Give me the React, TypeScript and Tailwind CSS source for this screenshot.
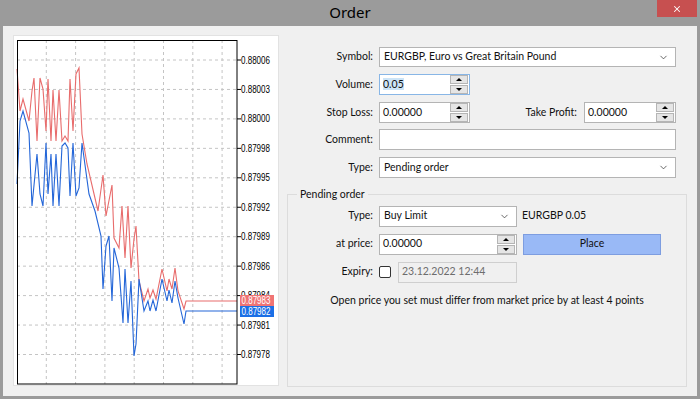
import { ChevronDown, X } from 'lucide-react';

const FONT = { fontFamily: 'Lato, "Liberation Sans", sans-serif' };
const CHART_FONT = { fontFamily: '"Liberation Sans", Arial, sans-serif' };

const ask: [number, number][] = [
  [16, 68], [19, 110], [22, 98], [28, 120], [31, 90], [33, 77], [36, 140], [39, 77], [42, 88],
  [45, 130], [47, 78], [50, 140], [52, 89], [55, 140], [58, 89], [61, 140], [64, 135], [67, 140],
  [69, 78], [72, 130], [75, 73], [78, 67], [81, 133], [86, 163], [97, 210], [102, 174], [105, 215],
  [111, 184], [113, 237], [118, 247], [121, 205], [124, 257], [127, 205], [130, 267], [133, 238],
  [135, 225], [138, 280], [143, 300], [147, 288], [149, 297], [152, 289], [155, 298], [161, 268],
  [166, 290], [168, 278], [171, 288], [174, 267], [177, 290], [183, 308], [185, 300], [236, 300],
];

const bid: [number, number][] = [
  [16, 183], [19, 120], [22, 110], [28, 132], [31, 205], [36, 153], [39, 193], [42, 205], [45, 142],
  [47, 193], [50, 153], [52, 205], [55, 153], [58, 205], [61, 145], [64, 142], [67, 147], [69, 195],
  [72, 142], [75, 195], [78, 187], [81, 142], [88, 193], [94, 210], [100, 235], [102, 288], [105, 245],
  [108, 235], [111, 300], [113, 247], [118, 267], [122, 322], [124, 268], [127, 322], [130, 280],
  [133, 355], [135, 343], [138, 278], [143, 310], [147, 300], [149, 310], [152, 299], [155, 310],
  [161, 278], [166, 300], [168, 289], [171, 302], [174, 280], [177, 297], [183, 323], [185, 310],
  [236, 310],
];

const levels = ['0.88006', '0.88003', '0.88000', '0.87998', '0.87995', '0.87992', '0.87989', '0.87986', '0.87984', '0.87981', '0.87978'];

function Chart() {
  const pts = (p: [number, number][]) => p.map(([x, y]) => `${x},${y}`).join(' ');
  return (
    <svg width="266" height="351" viewBox="13 35 266 351" className="block">
      {[0, 1, 2, 3, 4, 5, 6].map((k) => {
        const x = 45.3 + k * 29.3;
        return <line key={k} x1={x} y1={39} x2={x} y2={383} stroke="#c4c4c4" strokeDasharray="3 3" />;
      })}
      {levels.map((l, i) => {
        const y = 59 + i * 29.45;
        return (
          <g key={l}>
            <line x1={16} y1={y} x2={236} y2={y} stroke="#c4c4c4" strokeDasharray="3 3" />
            <line x1={236} y1={y} x2={240} y2={y} stroke="#000" />
            <text x={240} y={y + 3.5} fontSize="10" fill="#000" style={CHART_FONT} textLength={29} lengthAdjust="spacingAndGlyphs">{l}</text>
          </g>
        );
      })}
      <polyline points={pts(ask)} fill="none" stroke="#e86c6c" strokeWidth="1.1" />
      <polyline points={pts(bid)} fill="none" stroke="#2466d8" strokeWidth="1.1" />
      <rect x={16.5} y={39.5} width={219.5} height={343.5} fill="none" stroke="#000" />
      <rect x={239} y={294} width={34} height={11} fill="#f07474" />
      <text x={240.5} y={303} fontSize="10" fill="#fff" style={CHART_FONT} textLength={29} lengthAdjust="spacingAndGlyphs">0.87983</text>
      <rect x={239} y={305} width={34} height={11} fill="#1b6fe6" />
      <text x={240.5} y={314} fontSize="10" fill="#fff" style={CHART_FONT} textLength={29} lengthAdjust="spacingAndGlyphs">0.87982</text>
    </svg>
  );
}

function Spinner() {
  return (
    <div className="flex flex-col w-[18px] h-[19px] gap-[1px] mr-[1px]">
      <div className="flex-1 bg-[#e5e5e5] border border-[#b5b5b5] flex items-center justify-center">
        <div className="w-0 h-0 border-l-[3px] border-r-[3px] border-b-[3px] border-l-transparent border-r-transparent border-b-black" />
      </div>
      <div className="flex-1 bg-[#e5e5e5] border border-[#b5b5b5] flex items-center justify-center">
        <div className="w-0 h-0 border-l-[3px] border-r-[3px] border-t-[3px] border-l-transparent border-r-transparent border-t-black" />
      </div>
    </div>
  );
}

function NumInput({ value, width, focused = false }: { value: string; width: string; focused?: boolean }) {
  return (
    <div className={`${width} h-[21px] bg-white border flex items-center ${focused ? 'border-[#88b6e6]' : 'border-[#b4b4b4]'}`}>
      <div className="flex-1 pl-[3px]">
        <span className={focused ? 'bg-[#cce4f7]' : ''}>{value}</span>
      </div>
      <Spinner />
    </div>
  );
}

function Select({ value, width }: { value: string; width: string }) {
  return (
    <div className={`${width} h-[21px] bg-white border border-[#b4b4b4] flex items-center pl-[4px] pr-[6px]`}>
      <span className="flex-1">{value}</span>
      <ChevronDown className="w-[11px] h-[11px] text-[#333]" strokeWidth={1.6} />
    </div>
  );
}

function Label({ children, w = 'w-[92px]' }: { children: string; w?: string }) {
  return <div className={`${w} text-right pr-[6px] shrink-0`}>{children}</div>;
}

export default function App() {
  return (
    <div className="w-[700px] h-[399px] bg-[#9b9b9b] flex flex-col text-[10.5px] text-[#111]" style={FONT}>
      <div className="h-[26px] relative flex items-center justify-center shrink-0">
        <span className="text-[15px] text-black -mt-[2px]" style={{ fontFamily: '"Noto Sans", sans-serif' }}>Order</span>
        <div className="absolute right-[3px] top-0 w-[40px] h-[17px] bg-[#c75050] flex items-center justify-center">
          <X className="w-[10px] h-[10px] text-white" strokeWidth={2.5} />
        </div>
      </div>
      <div className="flex-1 mx-[3px] mb-[3px] bg-[#f0f0f0] flex gap-[8px] pl-[10px] pt-[9px]">
        <div className="w-[266px] h-[351px] bg-white border border-[#e2e2e2] shrink-0">
          <Chart />
        </div>
        <div className="w-[400px] flex flex-col pt-[12px]">
          <div className="flex items-center h-[20px]">
            <Label>Symbol:</Label>
            <Select value="EURGBP, Euro vs Great Britain Pound" width="w-[297px] !h-[20px]" />
          </div>
          <div className="flex items-center mt-[7px]">
            <Label>Volume:</Label>
            <NumInput value="0.05" width="w-[91px]" focused />
          </div>
          <div className="flex items-center mt-[7px]">
            <Label>Stop Loss:</Label>
            <NumInput value="0.00000" width="w-[91px]" />
            <div className="w-[114px] text-right pr-[7px]">Take Profit:</div>
            <NumInput value="0.00000" width="w-[92px]" />
          </div>
          <div className="flex items-center mt-[6px]">
            <Label>Comment:</Label>
            <div className="w-[297px] h-[21px] bg-white border border-[#b4b4b4]" />
          </div>
          <div className="flex items-center mt-[7px]">
            <Label>Type:</Label>
            <Select value="Pending order" width="w-[297px]" />
          </div>
          <fieldset className="mt-[9px] h-[200px] border border-[#dcdcdc] pl-0 pt-[3px]">
            <legend className="ml-[9px] px-[3px]">Pending order</legend>
            <div className="flex items-center">
              <Label w="w-[91px]">Type:</Label>
              <Select value="Buy Limit" width="w-[138px]" />
              <span className="ml-[5px]">EURGBP 0.05</span>
            </div>
            <div className="flex items-center mt-[7px]">
              <Label w="w-[91px]">at price:</Label>
              <NumInput value="0.00000" width="w-[138px]" />
              <div className="ml-[6px] w-[138px] h-[21px] bg-[#99b9f6] border border-[#7d9de0] flex items-center justify-center">
                Place
              </div>
            </div>
            <div className="flex items-center mt-[7px]">
              <Label w="w-[91px]">Expiry:</Label>
              <div className="w-[12px] h-[12px] bg-white border border-[#333] rounded-[2px]" />
              <div className="ml-[7px] w-[119px] h-[21px] border border-[#cfcfcf] bg-[#f0f0f0] text-[#6d6d6d] flex items-center pl-[3px]">
                23.12.2022 12:44
              </div>
            </div>
            <div className="mt-[10px] text-center">Open price you set must differ from market price by at least 4 points</div>
          </fieldset>
        </div>
      </div>
    </div>
  );
}
